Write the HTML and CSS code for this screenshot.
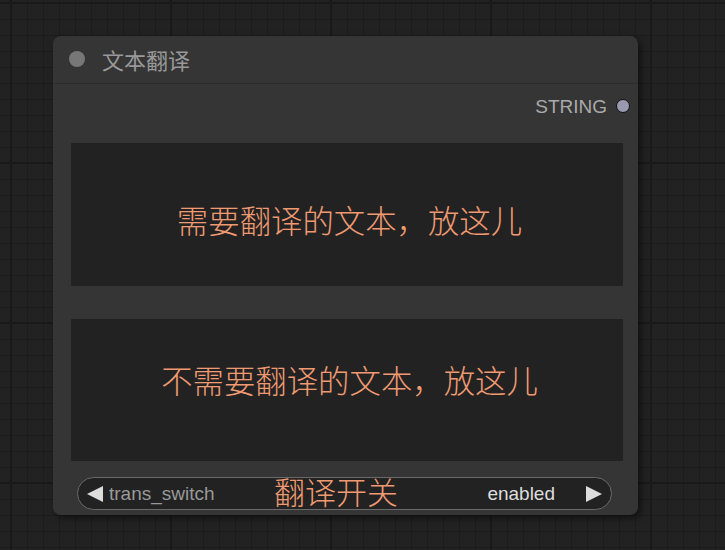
FILE: index.html
```html
<!DOCTYPE html>
<html lang="zh">
<head>
<meta charset="utf-8">
<title>文本翻译</title>
<link rel="stylesheet" href="styles.css">
</head>
<body>
<div class="canvas">
  <div class="node">
    <div class="title-bar">
      <span class="title-dot"></span>
      <span class="title-text">文本翻译</span>
    </div>
    <div class="body">
      <div class="output-row">
        <span class="output-label">STRING</span>
        <span class="output-dot"></span>
      </div>
      <div class="textarea ta1"><span class="placeholder">需要翻译的文本，放这儿</span></div>
      <div class="textarea ta2"><span class="placeholder">不需要翻译的文本，放这儿</span></div>
      <div class="toggle">
        <span class="arrow arrow-left"></span>
        <span class="toggle-name">trans_switch</span>
        <span class="toggle-value">enabled</span>
        <span class="arrow arrow-right"></span>
        <span class="toggle-overlay">翻译开关</span>
      </div>
    </div>
  </div>
</div>
</body>
</html>
```

FILE: styles.css
```css
html, body {
  margin: 0;
  padding: 0;
}
body {
  width: 725px;
  height: 550px;
  overflow: hidden;
  background-color: #222222;
  background-image:
    linear-gradient(to right, #191919 2px, transparent 2px),
    linear-gradient(to bottom, #191919 2px, transparent 2px),
    linear-gradient(to right, #1c1c1c 1px, transparent 1px),
    linear-gradient(to bottom, #1c1c1c 1px, transparent 1px);
  background-size: 160px 160px, 160px 160px, 16px 16px, 16px 16px;
  background-position: 10px 0, 0 2px, 11px 0, 0 3px;
  font-family: "Liberation Sans", Arial, "Noto Sans CJK SC", sans-serif;
}
.canvas {
  position: relative;
  width: 725px;
  height: 550px;
}
.node {
  position: absolute;
  left: 53px;
  top: 36px;
  width: 585px;
  height: 479px;
  background: #353535;
  border-radius: 8px;
  box-shadow: 3px 3px 7px rgba(0, 0, 0, 0.5);
  display: flex;
  flex-direction: column;
}
.title-bar {
  height: 47px;
  border-bottom: 1px solid #2c2c2c;
  display: flex;
  align-items: center;
  padding-left: 16px;
  box-sizing: content-box;
}
.title-dot {
  width: 16px;
  height: 16px;
  border-radius: 50%;
  background: #777777;
  margin-right: 17px;
  margin-top: -1px;
}
.title-text {
  font-family: "Noto Sans CJK SC", sans-serif;
  font-size: 22px;
  color: #999999;
  line-height: 1;
  margin-top: -1px;
}
.body {
  flex: 1;
  display: flex;
  flex-direction: column;
  padding: 0 15px 0 18px;
}
.output-row {
  height: 46px;
  display: flex;
  justify-content: flex-end;
  align-items: center;
}
.output-label {
  font-size: 19px;
  color: #aaaaaa;
  margin-right: 9px;
  margin-top: -1px;
}
.output-dot {
  width: 12px;
  height: 12px;
  border-radius: 50%;
  background: #9b99b0;
  border: 1.5px solid #111;
  margin-right: -7px;
  margin-top: -3px;
}
.textarea {
  background: #222222;
  display: flex;
  justify-content: center;
  box-sizing: border-box;
  padding-left: 5px;
}
.ta1 {
  margin-top: 13px;
  height: 143px;
  padding-top: 61px;
}
.ta2 {
  margin-top: 33px;
  height: 142px;
  padding-top: 45px;
}
.placeholder {
  font-family: "Noto Sans CJK SC", sans-serif;
  font-weight: 300;
  font-size: 31.4px;
  line-height: 31px;
  color: #f09a72;
}
.toggle {
  position: relative;
  margin: 16px 11px 0 6px;
  height: 33px;
  box-sizing: border-box;
  border: 1.5px solid #6a6a6a;
  border-radius: 17px;
  background: #222222;
  display: flex;
  align-items: center;
  padding: 0 9px 0 9px;
  font-size: 19px;
}
.arrow {
  width: 0;
  height: 0;
  border-top: 8px solid transparent;
  border-bottom: 8px solid transparent;
}
.arrow-left {
  border-right: 16px solid #dddddd;
  margin-right: 6px;
}
.arrow-right {
  border-left: 16px solid #dddddd;
  margin-left: 31px;
}
.toggle-name {
  color: #999999;
  flex: 1;
}
.toggle-value {
  color: #dddddd;
}
.toggle-overlay {
  position: absolute;
  left: 196px;
  top: -3px;
  font-family: "Noto Sans CJK SC", sans-serif;
  font-weight: 300;
  font-size: 31px;
  line-height: 31px;
  color: #f09a72;
}
```
